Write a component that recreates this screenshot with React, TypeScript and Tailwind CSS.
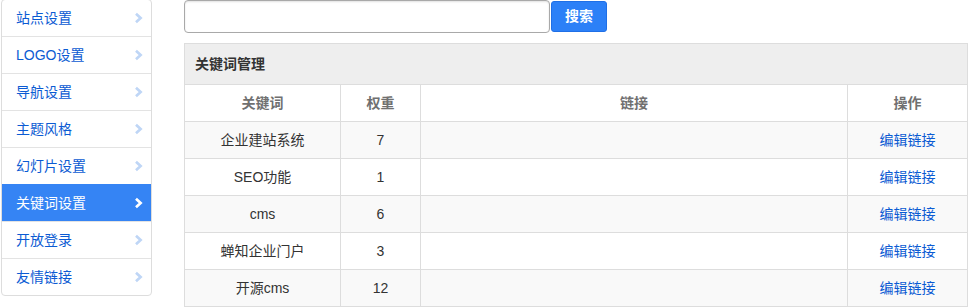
import React from "react";

const menu = ["站点设置", "LOGO设置", "导航设置", "主题风格", "幻灯片设置", "关键词设置", "开放登录", "友情链接"];
const rows = [
  { k: "企业建站系统", w: "7" },
  { k: "SEO功能", w: "1" },
  { k: "cms", w: "6" },
  { k: "蝉知企业门户", w: "3" },
  { k: "开源cms", w: "12" },
];

function Chevron({ active }: { active: boolean }) {
  return (
    <svg width="9" height="12" viewBox="0 0 9 12" className="shrink-0">
      <polyline
        points="2,1.8 6.6,6 2,10.2"
        fill="none"
        stroke={active ? "#ffffff" : "#bfd6f6"}
        strokeWidth="2.7"
        strokeLinecap="butt"
        strokeLinejoin="miter"
      />
    </svg>
  );
}

export default function App() {
  return (
    <div className="flex items-start bg-white w-[970px] h-[307px] overflow-hidden font-['Liberation_Sans','Noto_Sans_CJK_SC',sans-serif] text-[14px]">
      <div className="ml-px -mt-px w-[151px] shrink-0 border border-[#dddddd] rounded-[4px] overflow-hidden bg-white">
        {menu.map((m, i) => {
          const active = i === 5;
          return (
            <div
              key={m}
              className={`flex items-center justify-between pl-[14px] pr-[8px] ${i > 0 ? "border-t h-[37px]" : "h-[36px]"} ${
                active ? "bg-[#3584f4] border-[#3584f4] text-white" : "border-[#e3e3e3] text-[#0b5bd3]"
              }`}
            >
              <span className="leading-none">{m}</span>
              <Chevron active={active} />
            </div>
          );
        })}
      </div>
      <div className="ml-[32px] w-[784px] shrink-0">
        <div className="flex items-center h-[33px]">
          <div className="w-[366px] h-[33px] border border-[#a9a9a9] rounded-[4px] shadow-[inset_0_1px_2px_rgba(0,0,0,0.12)] bg-white" />
          <button className="ml-px h-[31px] w-[56px] rounded-[3px] border border-[#1f6fe6] bg-[#2c80f7] text-white font-bold text-[14px] flex items-center justify-center">
            搜索
          </button>
        </div>
        <div className="mt-[10px] border border-[#dddddd]">
          <div className="h-[41px] bg-[#eeeeee] border-b border-[#dddddd] flex items-center pl-[10px] font-bold text-[#333333]">
            关键词管理
          </div>
          <div className="flex h-[37px] border-b border-[#dddddd] font-bold text-[#707070]">
            <div className="w-[155px] flex items-center justify-center">关键词</div>
            <div className="w-[80px] border-l border-[#dddddd] flex items-center justify-center">权重</div>
            <div className="w-[427px] border-l border-[#dddddd] flex items-center justify-center">链接</div>
            <div className="flex-1 border-l border-[#dddddd] flex items-center justify-center">操作</div>
          </div>
          {rows.map((r, i) => (
            <div
              key={r.k}
              className={`flex text-[#333333] ${i < rows.length - 1 ? "h-[37px] border-b border-[#dddddd]" : "h-[36px]"} ${
                i % 2 === 0 ? "bg-[#f9f9f9]" : "bg-white"
              }`}
            >
              <div className="w-[155px] flex items-center justify-center">{r.k}</div>
              <div className="w-[80px] border-l border-[#dddddd] flex items-center justify-center">{r.w}</div>
              <div className="w-[427px] border-l border-[#dddddd]" />
              <div className="flex-1 border-l border-[#dddddd] flex items-center justify-center text-[#0b5bd3]">编辑链接</div>
            </div>
          ))}
        </div>
      </div>
    </div>
  );
}
